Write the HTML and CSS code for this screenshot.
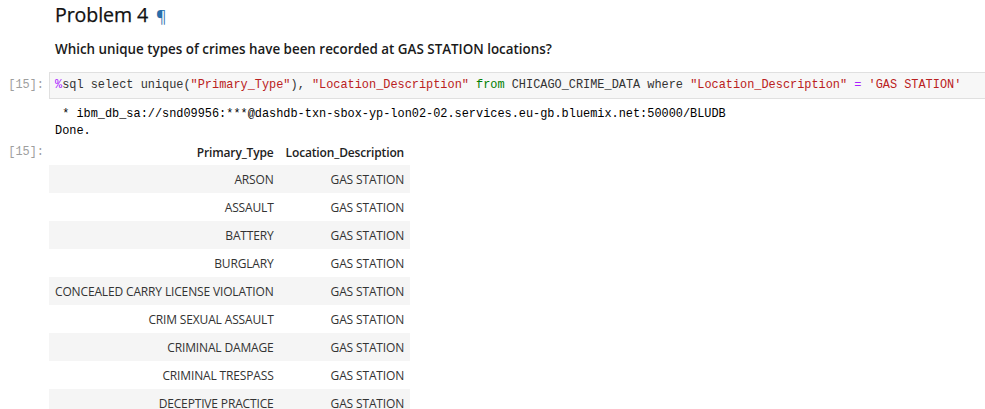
FILE: index.html
```html
<!DOCTYPE html>
<html>
<head>
<meta charset="utf-8">
<link rel="stylesheet" href="styles.css">
</head>
<body>
<div class="notebook">
  <div class="md-cell">
    <h2 class="heading">Problem 4 <a class="anchor">¶</a></h2>
    <p class="question">Which unique types of crimes have been recorded at GAS STATION locations?</p>
  </div>

  <div class="cell-row code-row">
    <div class="prompt">[15]:</div>
    <div class="code-box"><span class="magic">%</span>sql select unique(<span class="str">"Primary_Type"</span>), <span class="str">"Location_Description"</span> <span class="kw">from</span> CHICAGO_CRIME_DATA where <span class="str">"Location_Description"</span> <span class="op">=</span> <span class="str">'GAS STATION'</span></div>
  </div>

  <div class="cell-row">
    <div class="prompt"></div>
    <pre class="stream"> * ibm_db_sa://snd09956:***@dashdb-txn-sbox-yp-lon02-02.services.eu-gb.bluemix.net:50000/BLUDB
Done.</pre>
  </div>

  <div class="cell-row">
    <div class="prompt out-prompt">[15]:</div>
    <table class="result">
      <thead>
        <tr><th class="c1">Primary_Type</th><th class="c2">Location_Description</th></tr>
      </thead>
      <tbody>
        <tr><td>ARSON</td><td>GAS STATION</td></tr>
        <tr><td>ASSAULT</td><td>GAS STATION</td></tr>
        <tr><td>BATTERY</td><td>GAS STATION</td></tr>
        <tr><td>BURGLARY</td><td>GAS STATION</td></tr>
        <tr><td>CONCEALED CARRY LICENSE VIOLATION</td><td>GAS STATION</td></tr>
        <tr><td>CRIM SEXUAL ASSAULT</td><td>GAS STATION</td></tr>
        <tr><td>CRIMINAL DAMAGE</td><td>GAS STATION</td></tr>
        <tr><td>CRIMINAL TRESPASS</td><td>GAS STATION</td></tr>
        <tr><td>DECEPTIVE PRACTICE</td><td>GAS STATION</td></tr>
      </tbody>
    </table>
  </div>
</div>
</body>
</html>
```

FILE: styles.css
```css
html, body {
  margin: 0;
  padding: 0;
  background: #ffffff;
  overflow: hidden;
}
body {
  font-family: "Open Sans", "Noto Sans", sans-serif;
  color: #000;
}
.notebook {
  width: 1000px;
}
.md-cell {
  padding-left: 55px;
}
.heading {
  margin: 0;
  padding-top: 1px;
  font-size: 19.6px;
  font-weight: 400;
  line-height: 28px;
  color: #111;
  letter-spacing: -0.1px;
  -webkit-text-stroke: 0.25px #111;
}
.anchor {
  color: #296eaa;
  font-size: 16px;
  margin-left: 3px;
  -webkit-text-stroke: 0;
}
.question {
  margin: 9px 0 0 0;
  font-size: 13.4px;
  font-weight: 600;
  line-height: 20px;
  color: #1a1a1a;
  letter-spacing: 0;
}
.cell-row {
  display: flex;
  align-items: flex-start;
}
.code-row {
  margin-top: 13px;
}
.prompt {
  flex: 0 0 49px;
  box-sizing: border-box;
  padding-right: 5px;
  text-align: right;
  font-family: "Liberation Mono", monospace;
  font-size: 11.9px;
  color: #9e9e9e;
  line-height: 27px;
}
.code-box {
  flex: 1;
  box-sizing: border-box;
  height: 27px;
  background: #f7f7f7;
  border: 1px solid #e0e0e0;
  border-right: none;
  padding: 0 0 0 5px;
  font-family: "Liberation Mono", monospace;
  font-size: 11.9px;
  line-height: 25px;
  color: #333;
  white-space: pre;
}
.magic { color: #aa22ff; }
.str { color: #ba2121; }
.kw { color: #008000; }
.op { color: #aa22ff; }
.stream {
  margin: 7px 0 0 0;
  padding-left: 6px;
  font-family: "Liberation Mono", monospace;
  font-size: 11.9px;
  line-height: 17px;
  color: #000;
}
.out-prompt {
  margin-top: 2px;
  line-height: 20px;
}
.result {
  border-collapse: collapse;
  font-family: "Open Sans", "Noto Sans", sans-serif;
  font-size: 12px;
  color: #333;
}
.result th, .result td {
  text-align: right;
  padding: 0 6px;
  white-space: nowrap;
  letter-spacing: -0.15px;
}
.result th {
  height: 25px;
  font-weight: 600;
  color: #222;
}
.result td {
  height: 28px;
}
.result .c1 { width: 217px; }
.result .c2 { width: 118px; }
.result tbody tr:nth-child(odd) {
  background: #f5f5f5;
}
```
